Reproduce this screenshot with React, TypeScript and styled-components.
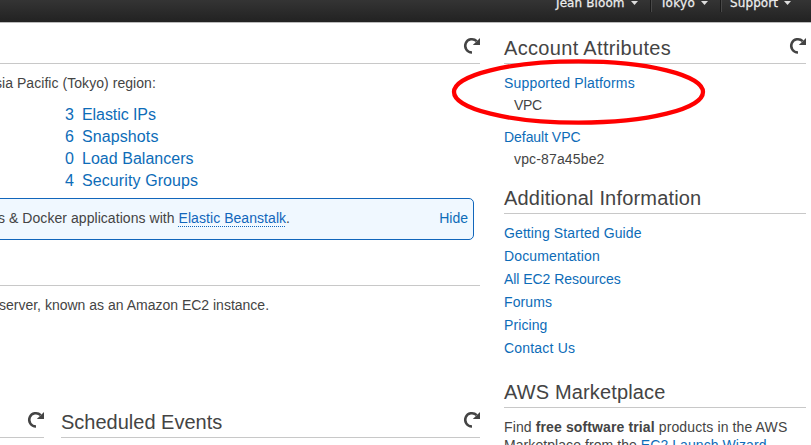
import React from "react";
import styled, { createGlobalStyle } from "styled-components";

const Global = createGlobalStyle`
  *, *::before, *::after { box-sizing: border-box; }
  html, body { margin: 0; padding: 0; overflow: hidden; background: #fff; }
  body { font-family: "Liberation Sans", Arial, sans-serif; font-size: 14px; color: #444; }
`;

const Page = styled.div`
  width: 811px;
  height: 445px;
  overflow: hidden;
  position: relative;
  background: #fff;
`;

const TopBar = styled.header`
  height: 23px;
  display: flex;
  justify-content: flex-end;
  background: linear-gradient(#343434, #222);
  border-bottom: 1px solid #bbb;
`;

const NavItem = styled.div<{ $width: number; $spacing?: number }>`
  width: ${(p) => p.$width}px;
  flex: none;
  height: 12px;
  display: flex;
  align-items: center;
  gap: 6px;
  padding-left: 8px;
  border-left: 1px solid transparent;
  & + & { border-left-color: #484848; box-shadow: -1px 0 #1a1a1a; }
  > span {
    font: 12px/16px "DejaVu Sans", Verdana, sans-serif;
    letter-spacing: ${(p) => p.$spacing ?? 0}px;
    color: #eee;
    -webkit-text-stroke: 0.25px #eee;
    margin-top: -7px;
    white-space: nowrap;
  }
  > svg { margin-top: -6px; }
`;

const Columns = styled.div`
  display: grid;
  grid-template-columns: 480px 302px;
  column-gap: 24px;
`;

const Column = styled.div`
  min-width: 0;
`;

const SectionHead = styled.div<{ $height: number }>`
  height: ${(p) => p.$height}px;
  display: flex;
  align-items: flex-end;
  justify-content: space-between;
  border-bottom: 1px solid #c8c8c8;
`;

const Title = styled.h2<{ $spacing?: number }>`
  margin: 0 0 3px;
  font-size: 20px;
  line-height: 24px;
  font-weight: 400;
  letter-spacing: ${(p) => p.$spacing ?? 0}px;
  white-space: nowrap;
`;

const RefreshSvg = styled.svg`
  display: block;
  margin: 0 0 9px auto;
`;

const Text = styled.p<{ $top?: number; $spacing?: number; $indent?: number }>`
  margin: ${(p) => p.$top ?? 0}px 0 0 ${(p) => p.$indent ?? 0}px;
  line-height: 18px;
  white-space: nowrap;
  letter-spacing: ${(p) => p.$spacing ?? 0}px;
`;

const Link = styled.a<{ $spacing?: number }>`
  color: #0d6cb8;
  ${(p) => (p.$spacing === undefined ? "" : `letter-spacing: ${p.$spacing}px;`)}
`;

const Counts = styled.div`
  margin: 12px 0 0 65px;
  display: grid;
  grid-template-columns: 17px auto;
  grid-auto-rows: 22px;
  font-size: 16px;
  line-height: 22px;
`;

const Notice = styled.div`
  width: 484px;
  height: 42px;
  margin: 6px 0 0 -10px;
  padding: 0 5px 2px 10px;
  display: flex;
  align-items: center;
  justify-content: space-between;
  background: #f0f8ff;
  border: 1px solid #1166bb;
  border-radius: 5px;
`;

const DottedLink = styled(Link)`
  text-decoration: underline dotted 1px;
  text-underline-offset: 3px;
  color: #1166bb;
`;

const BottomRow = styled.div`
  display: grid;
  grid-template-columns: 44px 419px;
  column-gap: 17px;
  margin-top: 94px;
`;

const LinkList = styled.div`
  margin-top: 8px;
  display: flex;
  flex-direction: column;
  line-height: 23px;
`;

const Highlight = styled.svg`
  position: absolute;
  left: 450px;
  top: 56px;
`;

const Refresh = () => (
  <RefreshSvg width="18" height="18" viewBox="0 0 18 18">
    <path d="M10 16.6A6.7 6.7 0 1 1 14.7 5.2" fill="none" stroke="#444" strokeWidth="2.5" />
    <path d="M18 2V9H10.8Z" fill="#444" />
  </RefreshSvg>
);

const Caret = () => (
  <svg width="7" height="4" viewBox="0 0 7 4">
    <path d="M0 0H7L3.5 4Z" fill="#ddd" />
  </svg>
);

const counts: [string, string, number][] = [
  ["3", "Elastic IPs", -0.08],
  ["6", "Snapshots", 0.1],
  ["0", "Load Balancers", 0.03],
  ["4", "Security Groups", 0.1],
];

const resources: [string, number][] = [
  ["Getting Started Guide", 0.1],
  ["Documentation", 0.13],
  ["All EC2 Resources", -0.05],
  ["Forums", 0.1],
  ["Pricing", 0.1],
  ["Contact Us", 0.2],
];

export default function App() {
  return (
    <Page>
      <Global />
      <TopBar>
        <NavItem $width={104} $spacing={0.1}><span>Jean Bloom</span><Caret /></NavItem>
        <NavItem $width={70} $spacing={0.3}><span>Tokyo</span><Caret /></NavItem>
        <NavItem $width={90} $spacing={0.1}><span>Support</span><Caret /></NavItem>
      </TopBar>
      <Columns>
        <Column>
          <SectionHead $height={41}><Refresh /></SectionHead>
          <Text $top={10} $spacing={0.05} $indent={-5}>sia Pacific (Tokyo) region:</Text>
          <Counts>
            {counts.map(([n, label, sp]) => (
              <React.Fragment key={label}>
                <Link>{n}</Link>
                <Link $spacing={sp}>{label}</Link>
              </React.Fragment>
            ))}
          </Counts>
          <Notice>
            <Text $indent={-3} $spacing={0.055}>s &amp; Docker applications with <DottedLink>Elastic Beanstalk</DottedLink>.</Text>
            <Link>Hide</Link>
          </Notice>
          <SectionHead $height={46} />
          <Text $top={10} $indent={-1}>server, known as an Amazon EC2 instance.</Text>
          <BottomRow>
            <SectionHead $height={30}><Refresh /></SectionHead>
            <SectionHead $height={30}><Title>Scheduled Events</Title><Refresh /></SectionHead>
          </BottomRow>
        </Column>
        <Column>
          <SectionHead $height={41}><Title $spacing={0.33}>Account Attributes</Title><Refresh /></SectionHead>
          <Text $top={10} $spacing={0.17}><Link>Supported Platforms</Link></Text>
          <Text $top={4} $indent={10} $spacing={-0.3}>VPC</Text>
          <Text $top={14} $spacing={-0.05}><Link>Default VPC</Link></Text>
          <Text $top={4} $indent={10} $spacing={0.15}>vpc-87a45be2</Text>
          <SectionHead $height={46}><Title $spacing={0.18}>Additional Information</Title></SectionHead>
          <LinkList>
            {resources.map(([label, sp]) => <Link key={label} $spacing={sp}>{label}</Link>)}
          </LinkList>
          <SectionHead $height={48}><Title $spacing={0.14}>AWS Marketplace</Title></SectionHead>
          <Text $top={10} $spacing={0.12}>Find <b>free software trial</b> products in the AWS</Text>
          <Text $spacing={0.07}>Marketplace from the <Link>EC2 Launch Wizard</Link></Text>
        </Column>
      </Columns>
      <Highlight width="258" height="72" viewBox="0 0 258 72">
        <ellipse cx="128.5" cy="36" rx="124.5" ry="30.7" fill="none" stroke="#f00" strokeWidth="4.3" />
      </Highlight>
    </Page>
  );
}
